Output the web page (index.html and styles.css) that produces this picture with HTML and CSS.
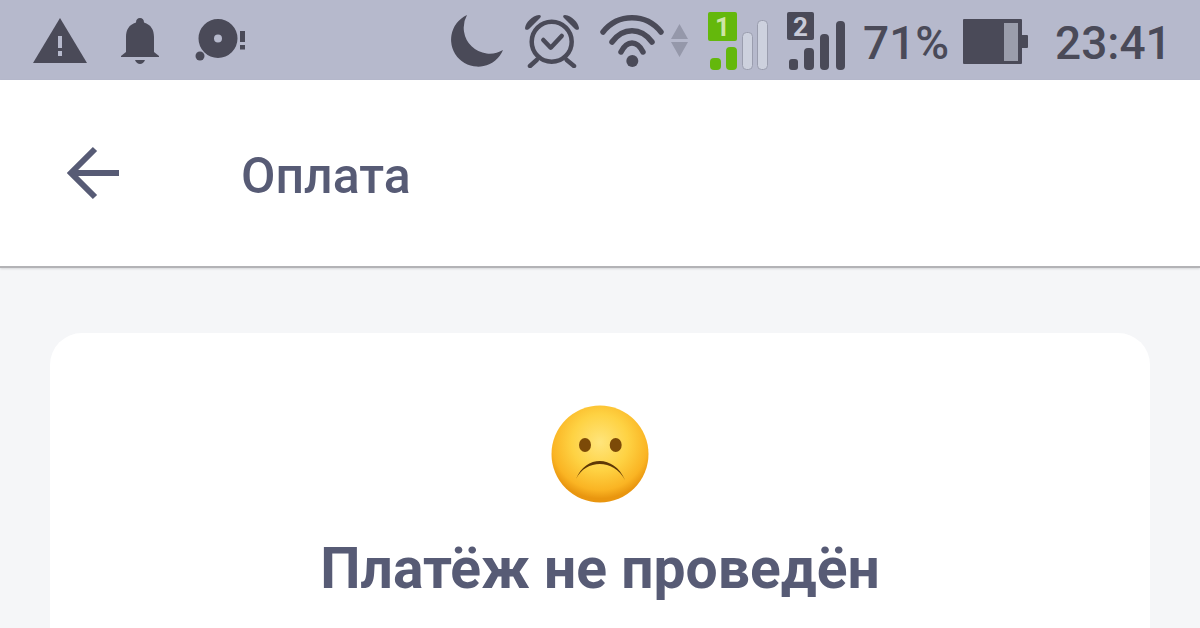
FILE: index.html
```html
<!DOCTYPE html>
<html lang="ru">
<head>
    <meta charset="UTF-8">
    <title>Оплата</title>
    <link rel="stylesheet" href="styles.css">
</head>
<body>
    <div class="statusbar">
        <div class="status-left">
            <svg class="ic-warn" width="54" height="46" viewBox="0 0 54 46">
                <path class="dark" d="M27 0 54 45H0Z"/>
                <path class="cut" d="M25 18h4v12h-4zM25 33h4v5h-4z"/>
            </svg>
            <svg class="ic-bell" width="38" height="46" viewBox="0 0 38 46">
                <path class="dark" d="M19 0c2.500 0 4 1.700 4 4.500C30 6.500 33 12 33 19v15l5 4v1H0v-1l5-4V19C5 12 8 6.500 15 4.500 15 1.700 16.500 0 19 0Z"/>
                <path class="dark" d="M14 42h10c-1 2.500-3 4-5 4s-4-1.500-5-4Z"/>
            </svg>
            <svg class="ic-disc" width="51" height="44" viewBox="0 0 51 44">
                <path class="dark" fill-rule="evenodd" d="M23 0a19.500 19.500 0 1 1 0 39 19.500 19.500 0 0 1 0-39Zm0 15.500a4 4 0 1 0 0 8 4 4 0 0 0 0-8Z"/>
                <circle class="dark" cx="5" cy="37" r="4.500"/>
                <path class="dark" d="M45 12h5v11h-5zM45 26h5v4.500h-5z"/>
            </svg>
        </div>
        <div class="status-right">
            <svg class="ic-moon" width="55" height="54" viewBox="0 0 55 54">
                <path class="dark" d="M18 1A27 27 0 1 0 54 36 26 26 0 0 1 18 1Z"/>
            </svg>
            <svg class="ic-alarm" width="56" height="54" viewBox="0 0 56 54">
                <circle class="line" cx="27.700" cy="27.700" r="20"/>
                <path class="line" d="M19.300 26l7.400 7.700L37.700 22"/>
                <path class="dark" d="M1 14C2 8 8 2 15 1c2 0 2.500 1.500 1 3L5 15c-2 1.500-4 1-4-1ZM55 14c-1-6-7-12-14-13-2 0-2.500 1.500-1 3l11 11c2 1.500 4 1 4-1Z"/>
                <path class="line" d="M12.700 46 6 52M42.700 46l7.300 6"/>
            </svg>
            <svg class="ic-wifi" width="64" height="54" viewBox="0 0 64 54">
                <path class="wave" d="M3 18C18-1 46-1 61 18M12 28C23 13 41 13 52 28M21 38C27 26 37 26 43 38"/>
                <circle class="dark" cx="32.300" cy="47" r="6"/>
            </svg>
            <svg class="ic-arrows" width="17" height="34" viewBox="0 0 17 34">
                <path class="muted" d="M8.500 0 17 15H0ZM0 18h17L8.500 33Z"/>
            </svg>
            <svg class="ic-sim" width="60" height="58" viewBox="0 0 60 58">
                <rect class="green" width="29" height="29" rx="2"/>
                <text class="sim-num sim-num-green" x="14.500" y="24">1</text>
                <rect class="green" x="2" y="46" width="11" height="12" rx="4"/>
                <rect class="green" x="18" y="35" width="11" height="23" rx="4"/>
                <rect class="empty" x="34.500" y="20.500" width="10" height="37" rx="4"/>
                <rect class="empty" x="49.500" y="8.500" width="10" height="49" rx="4"/>
            </svg>
            <svg class="ic-sim ic-sim-two" width="60" height="58" viewBox="0 0 60 58">
                <rect class="dark" x="1" width="27" height="28" rx="2"/>
                <text class="sim-num" x="14.500" y="24">2</text>
                <rect class="dark" x="3" y="47" width="9" height="11" rx="3"/>
                <rect class="dark" x="18" y="36" width="10" height="22" rx="4"/>
                <rect class="dark" x="34" y="22" width="9" height="36" rx="4"/>
                <rect class="dark" x="50" y="9" width="9" height="49" rx="4"/>
            </svg>
            <span class="percent">71%</span>
            <svg class="ic-batt" width="65" height="45" viewBox="0 0 65 45">
                <rect class="dark" width="59" height="45" rx="1"/>
                <rect class="charge" x="41" y="4" width="14" height="38"/>
                <rect class="dark" x="58" y="16" width="7" height="13" rx="1"/>
            </svg>
            <span class="clock">23:41</span>
        </div>
    </div>

    <div class="header">
        <svg class="back" width="54" height="54" viewBox="0 0 54 54">
            <path d="M53 27H5M29 3 5 27l24 24"/>
        </svg>
        <div class="header-title">Оплата</div>
    </div>

    <div class="content">
        <div class="card">
            <svg class="face" width="100" height="100" viewBox="0 0 100 100">
                <defs>
                    <radialGradient id="skin" cx="50%" cy="38%" r="58%">
                        <stop offset="0" stop-color="#ffe57c"/>
                        <stop offset="0.5" stop-color="#fed243"/>
                        <stop offset="0.85" stop-color="#fab423"/>
                        <stop offset="1" stop-color="#e9960f"/>
                    </radialGradient>
                </defs>
                <circle cx="50" cy="49" r="48.500" fill="url(#skin)"/>
                <ellipse class="eye" cx="35" cy="40" rx="6" ry="7"/>
                <ellipse class="eye" cx="65.700" cy="40" rx="6" ry="7"/>
                <path class="frown" d="M26 74C36 50 64 50 75 75 64 54 36 54 26 74Z"/>
            </svg>
            <h1 class="title">Платёж не проведён</h1>
        </div>
    </div>
</body>
</html>
```

FILE: styles.css
```css
html,body
{
    margin: 0;
    padding: 0;
    height: 628px;
    overflow: hidden;
}
*
{
    box-sizing: border-box;
}
body
{
    background-color: #f5f6f8;
    font-family: Roboto, sans-serif;
}
svg
{
    display: block;
    flex: none;
}

.statusbar
{
    height: 80px;
    background-color: #b6b9cc;
    color: #4a4a58;
    display: flex;
    align-items: center;
    padding: 2px 0 0 33px;
}
.status-left,
.status-right
{
    display: flex;
    align-items: center;
}
.status-left
{
    width: 416px;
}
.ic-bell
{
    margin-left: 34px;
}
.ic-disc
{
    margin-left: 36px;
}
.ic-alarm
{
    margin-left: 20px;
}
.ic-wifi
{
    margin-left: 20px;
}
.ic-arrows
{
    margin-left: 7px;
}
.ic-sim
{
    margin-left: 20px;
}
.ic-sim-two
{
    margin-left: 18px;
}
.percent
{
    width: 85px;
    margin-left: 17px;
    padding-top: 3px;
    font-size: 46px;
    font-weight: 500;
    white-space: nowrap;
}
.ic-batt
{
    margin-left: 15px;
}
.clock
{
    margin-left: 27px;
    padding-top: 3px;
    font-size: 46px;
    font-weight: 500;
}

.dark
{
    fill: #4a4a58;
}
.cut
{
    fill: #b6b9cc;
}
.muted
{
    fill: #9598aa;
}
.green
{
    fill: #64b80c;
}
.empty
{
    fill: #cdd1de;
    stroke: #9a9dae;
}
.charge
{
    fill: #9a9dab;
}
.line,
.wave
{
    fill: none;
    stroke: #4a4a58;
    stroke-width: 4.500;
    stroke-linecap: round;
    stroke-linejoin: round;
}
.wave
{
    stroke-width: 5.500;
}
.sim-num
{
    fill: #c8cbd8;
    font-family: Roboto, sans-serif;
    font-size: 26px;
    font-weight: 700;
    text-anchor: middle;
}
.sim-num-green
{
    fill: #cfe5a8;
}

.header
{
    height: 188px;
    background-color: #fff;
    border-bottom: 2px solid #b3b3b6;
    box-shadow: 0 1px 2px rgba(0,0,0,.12);
    display: flex;
    align-items: center;
    padding: 0 0 0 66px;
}
.back
{
    fill: none;
    stroke: #575b75;
    stroke-width: 6;
}
.header-title
{
    margin-left: 121px;
    padding-top: 5px;
    font-size: 50px;
    font-weight: 500;
    color: #575b75;
}

.content
{
    padding: 65px 50px 0;
}
.card
{
    height: 295px;
    background-color: #fff;
    border-radius: 32px 32px 0 0;
    display: flex;
    flex-direction: column;
    align-items: center;
    padding-top: 72px;
}
.eye
{
    fill: #7c4a08;
}
.frown
{
    fill: #5e3806;
}
.title
{
    margin: 30px 0 0;
    font-size: 57px;
    font-weight: 700;
    color: #575b75;
    white-space: nowrap;
}
```
